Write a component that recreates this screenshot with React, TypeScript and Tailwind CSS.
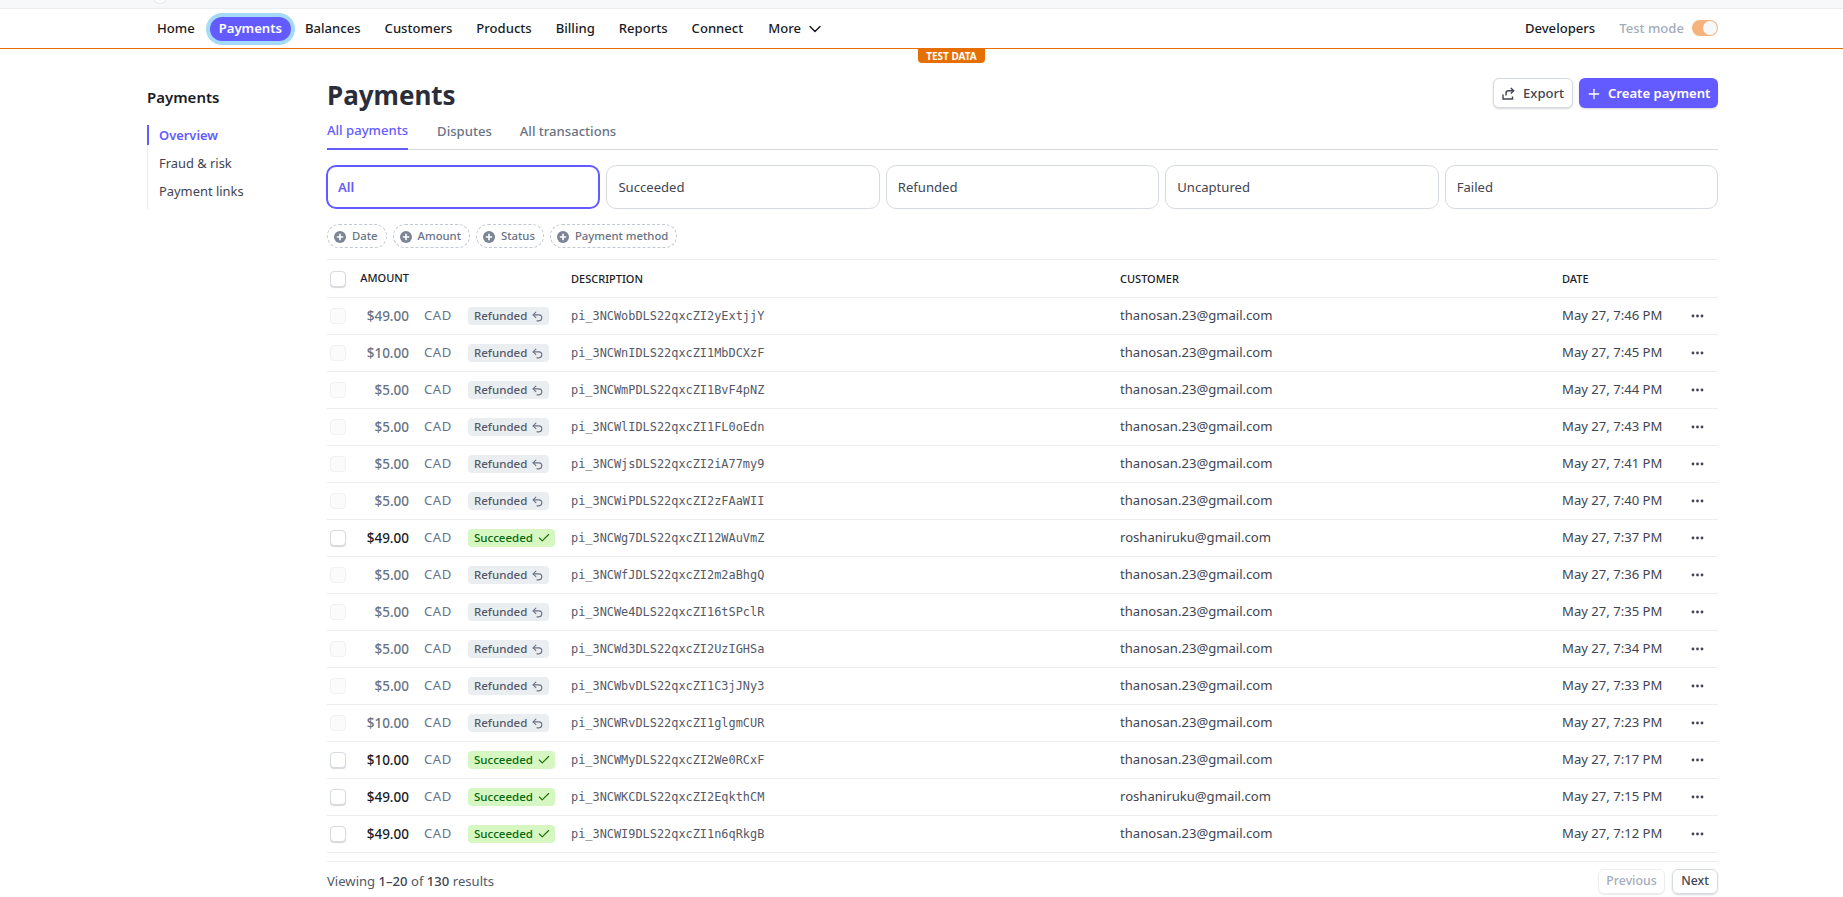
import React from "react";
import { Check, ChevronDown, Plus, Undo2 } from "lucide-react";

const nav = ["Balances", "Customers", "Products", "Billing", "Reports", "Connect"];
const T = "thanosan.23@gmail.com";
const R = "roshaniruku@gmail.com";
const rows: [string, string, boolean, string, string][] = [
  ["$49.00", "pi_3NCWobDLS22qxcZI2yExtjjY", false, T, "May 27, 7:46 PM"],
  ["$10.00", "pi_3NCWnIDLS22qxcZI1MbDCXzF", false, T, "May 27, 7:45 PM"],
  ["$5.00", "pi_3NCWmPDLS22qxcZI1BvF4pNZ", false, T, "May 27, 7:44 PM"],
  ["$5.00", "pi_3NCWlIDLS22qxcZI1FL0oEdn", false, T, "May 27, 7:43 PM"],
  ["$5.00", "pi_3NCWjsDLS22qxcZI2iA77my9", false, T, "May 27, 7:41 PM"],
  ["$5.00", "pi_3NCWiPDLS22qxcZI2zFAaWII", false, T, "May 27, 7:40 PM"],
  ["$49.00", "pi_3NCWg7DLS22qxcZI12WAuVmZ", true, R, "May 27, 7:37 PM"],
  ["$5.00", "pi_3NCWfJDLS22qxcZI2m2aBhgQ", false, T, "May 27, 7:36 PM"],
  ["$5.00", "pi_3NCWe4DLS22qxcZI16tSPclR", false, T, "May 27, 7:35 PM"],
  ["$5.00", "pi_3NCWd3DLS22qxcZI2UzIGHSa", false, T, "May 27, 7:34 PM"],
  ["$5.00", "pi_3NCWbvDLS22qxcZI1C3jJNy3", false, T, "May 27, 7:33 PM"],
  ["$10.00", "pi_3NCWRvDLS22qxcZI1glgmCUR", false, T, "May 27, 7:23 PM"],
  ["$10.00", "pi_3NCWMyDLS22qxcZI2We0RCxF", true, T, "May 27, 7:17 PM"],
  ["$49.00", "pi_3NCWKCDLS22qxcZI2EqkthCM", true, R, "May 27, 7:15 PM"],
  ["$49.00", "pi_3NCWI9DLS22qxcZI1n6qRkgB", true, T, "May 27, 7:12 PM"],
];

function ChipIcon() {
  return (
    <svg width="12" height="12" viewBox="0 0 12 12" className="shrink-0">
      <circle cx="6" cy="6" r="6" fill="#7b8595" />
      <path d="M6 2.8v6.4M2.8 6h6.4" stroke="#fff" strokeWidth="1.6" />
    </svg>
  );
}

function Dots() {
  return (
    <svg width="13" height="4" viewBox="0 0 13 4" fill="#414552">
      <circle cx="2" cy="2" r="1.4" />
      <circle cx="6.5" cy="2" r="1.4" />
      <circle cx="11" cy="2" r="1.4" />
    </svg>
  );
}

function Box({ on }: { on: boolean }) {
  return on ? (
    <div className="w-4 h-4 shrink-0 rounded-[4px] bg-white border border-[#d5dbe1] shadow-[0_1px_1px_rgba(0,0,0,0.16)]" />
  ) : (
    <div className="w-4 h-4 shrink-0 rounded-[4px] bg-[#fbfbfc] border border-[#eff1f4]" />
  );
}

export default function App() {
  return (
    <div className="w-full h-[897px] overflow-hidden bg-white relative font-['Noto_Sans',sans-serif] text-[#414552]">
      <div className="h-[9px] bg-[#f6f8fa] border-b border-[#ebeef1] overflow-hidden relative">
        <div className="absolute left-[152px] -top-[12px] w-[16px] h-[16px] rounded-full bg-white border border-[#e3e6ea]" />
      </div>
      <div className="h-[40px] border-b border-[#e56f00] flex items-center justify-between pl-[157px] pr-[125px] text-[13.1px] font-medium text-[#1a1b25]">
        <div className="flex items-center gap-[24px] pt-[1px]">
          <span>Home</span>
          <span className="-ml-[9px] -mr-[10px] px-[9px] h-[24px] flex items-center rounded-full bg-[#635bff] text-white font-semibold ring-4 ring-[#a4d9f8]">Payments</span>
          {nav.map((n) => (
            <span key={n}>{n}</span>
          ))}
          <span className="ml-[1px] flex items-center gap-[4px]">
            More
            <ChevronDown size={20} strokeWidth={1.75} />
          </span>
        </div>
        <div className="flex items-center">
          <span className="pt-[1px]">Developers</span>
          <span className="ml-[24px] pt-[1px] text-[#a3acba]">Test mode</span>
          <span className="ml-[8px] w-[26px] h-[16px] rounded-full bg-[#f5b27c] flex items-center justify-end pr-[1px]">
            <span className="w-[14px] h-[14px] rounded-full bg-[#f6f8fa]" />
          </span>
        </div>
      </div>
      <div className="absolute left-[918px] top-[49px] h-[14px] w-[67px] bg-[#e56f00] text-white text-[10px] font-bold rounded-b-[4px] flex items-center justify-center leading-none">
        TEST DATA
      </div>

      <div className="flex pl-[147px]">
        <aside className="w-[180px] shrink-0 pt-[36px]">
          <div className="text-[15px] font-semibold text-[#1a1b25] leading-[24px]">Payments</div>
          <div className="mt-[16px] border-l border-[#ebeef1] h-[84px] text-[12.9px] leading-[28px]">
            <div className="h-[20px] -ml-px border-l-2 border-[#635bff] pl-[10px] flex items-center text-[#635bff] font-semibold">Overview</div>
            <div className="h-[28px] mt-[4px] pl-[11px] flex items-center">Fraud &amp; risk</div>
            <div className="h-[28px] pl-[11px] flex items-center">Payment links</div>
          </div>
        </aside>

        <main className="w-[1391px] shrink-0 pt-[28px]">
          <div className="flex items-start justify-between h-[36px]">
            <h1 className="text-[26px] font-bold text-[#2a2e3b] leading-[36px]">Payments</h1>
            <div className="flex gap-[6px] mt-px">
              <button className="h-[30px] w-[80px] rounded-[6px] bg-white border border-[#d5dbe1] shadow-[0_1px_2px_rgba(0,0,0,0.16)] flex items-center pl-[8px] gap-[8px] pt-[1px] text-[13.1px] font-medium">
                <svg width="13" height="13" viewBox="0 0 13 13" fill="none" stroke="#414552" strokeWidth="1.4" className="shrink-0">
                  <path d="M1 7.5v4.5h9.5V9.5" />
                  <path d="M4 8.5V6.2c0-1.5 1-2.4 2.6-2.4h5" />
                  <path d="M8.8 1l2.9 2.8-2.9 2.8" />
                </svg>
                Export
              </button>
              <button className="h-[30px] w-[139px] rounded-[6px] bg-[#635bff] text-white flex items-center pl-[7px] gap-[6px] pt-[1px] text-[13.1px] font-semibold shadow-[0_1px_2px_rgba(0,0,0,0.16)]">
                <Plus size={16} strokeWidth={2} className="shrink-0" />
                Create payment
              </button>
            </div>
          </div>

          <div className="mt-[8px] h-[29px] border-b border-[#d8dbe3] flex gap-[28px] text-[13.1px] font-medium text-[#687385]">
            <span className="h-[29px] pb-[8px] border-b-2 border-[#635bff] text-[#635bff] flex items-center">All payments</span>
            <span className="h-[28px] pb-[7px] ml-[1px] flex items-center">Disputes</span>
            <span className="h-[28px] pb-[7px] flex items-center">All transactions</span>
          </div>

          <div className="mt-[15px] h-[44px] flex gap-[6px] text-[13.1px]">
            <div className="flex-1 rounded-[10px] border-2 border-[#635bff] -ml-px pl-[10px] pt-[1px] flex items-center text-[#635bff] font-semibold">All</div>
            {["Succeeded", "Refunded", "Uncaptured", "Failed"].map((t) => (
              <div key={t} className="flex-1 rounded-[10px] border border-[#d5dbe1] pl-[11px] pt-[1px] flex items-center">{t}</div>
            ))}
          </div>

          <div className="mt-[15px] h-[24px] flex gap-[6px] text-[11.3px] font-medium text-[#687385]">
            {["Date", "Amount", "Status", "Payment method"].map((t) => (
              <div key={t} className="h-[24px] rounded-full border border-dashed border-[#c0c8d2] pl-[6px] pr-[8px] pt-[1px] flex items-center gap-[6px]">
                <ChipIcon />
                {t}
              </div>
            ))}
          </div>

          <div className="mt-[11px] h-[603px] overflow-hidden border-y border-[#ebeef1]">
            <div className="h-[38px] border-b border-[#ebeef1] flex items-center pl-[3px] text-[11px] font-medium text-[#1a1b25]">
              <Box on />
              <span className="w-[63px] text-right -mt-[1px] shrink-0">AMOUNT</span>
              <span className="w-[162px] shrink-0" />
              <span className="w-[549px] shrink-0 pt-[1px]">DESCRIPTION</span>
              <span className="w-[442px] shrink-0 pt-[1px]">CUSTOMER</span>
              <span className="pt-[1px]">DATE</span>
            </div>
            {rows.map(([amt, id, ok, cust, date]) => (
              <div key={id} className="h-[37px] border-b border-[#ebeef1] flex items-center pl-[3px] text-[13.1px]">
                <Box on={ok} />
                <span className={ok ? "w-[63px] shrink-0 text-right text-[13.5px] font-medium text-[#1a1b25]" : "w-[63px] shrink-0 text-right text-[13.5px] font-medium text-[#687385]"}>{amt}</span>
                <span className="w-[59px] shrink-0 pl-[15px] tracking-[0.5px] text-[#687385]">CAD</span>
                <span className="w-[103px] shrink-0 flex">
                  {ok ? (
                    <span className="flex items-center h-[18px] rounded-[4px] bg-[#d7f7c2] pl-[6px] pr-[4px] gap-[4px] text-[11.5px] font-medium text-[#05690d]">
                      Succeeded
                      <Check size={14} strokeWidth={2} className="text-[#217005]" />
                    </span>
                  ) : (
                    <span className="flex items-center h-[18px] rounded-[4px] bg-[#ebeef1] pl-[6px] pr-[5px] gap-[4px] text-[11.5px] font-medium text-[#545969]">
                      Refunded
                      <Undo2 size={13} strokeWidth={2} className="text-[#687385]" />
                    </span>
                  )}
                </span>
                <span className="w-[549px] shrink-0 pt-[1px] font-['DejaVu_Sans_Mono',monospace] text-[11.9px] text-[#545969]">{id}</span>
                <span className="w-[442px] shrink-0">{cust}</span>
                <span className="w-[124px] shrink-0 whitespace-nowrap">{date}</span>
                <span className="w-[18px] flex justify-end"><Dots /></span>
              </div>
            ))}
            <div className="h-[37px] flex items-center pl-[141px]">
              <div className="w-[87px] h-[18px] rounded-[4px] bg-[#d7f7c2]" />
            </div>
          </div>

          <div className="mt-[7px] h-[25px] flex items-center justify-between text-[13.1px]">
            <div className="text-[#545969]">
              Viewing <span className="font-medium text-[#414552]">1–20</span> of <span className="font-medium text-[#414552]">130</span> results
            </div>
            <div className="flex gap-[7px] text-[12.3px] font-medium">
              <button className="h-[25px] w-[67px] rounded-[6px] border border-[#ebeef1] text-[#a3acba] shadow-[0_1px_1px_rgba(0,0,0,0.08)]">Previous</button>
              <button className="h-[25px] w-[46px] rounded-[6px] border border-[#d5dbe1] shadow-[0_1px_2px_rgba(0,0,0,0.16)]">Next</button>
            </div>
          </div>
        </main>
      </div>
    </div>
  );
}
